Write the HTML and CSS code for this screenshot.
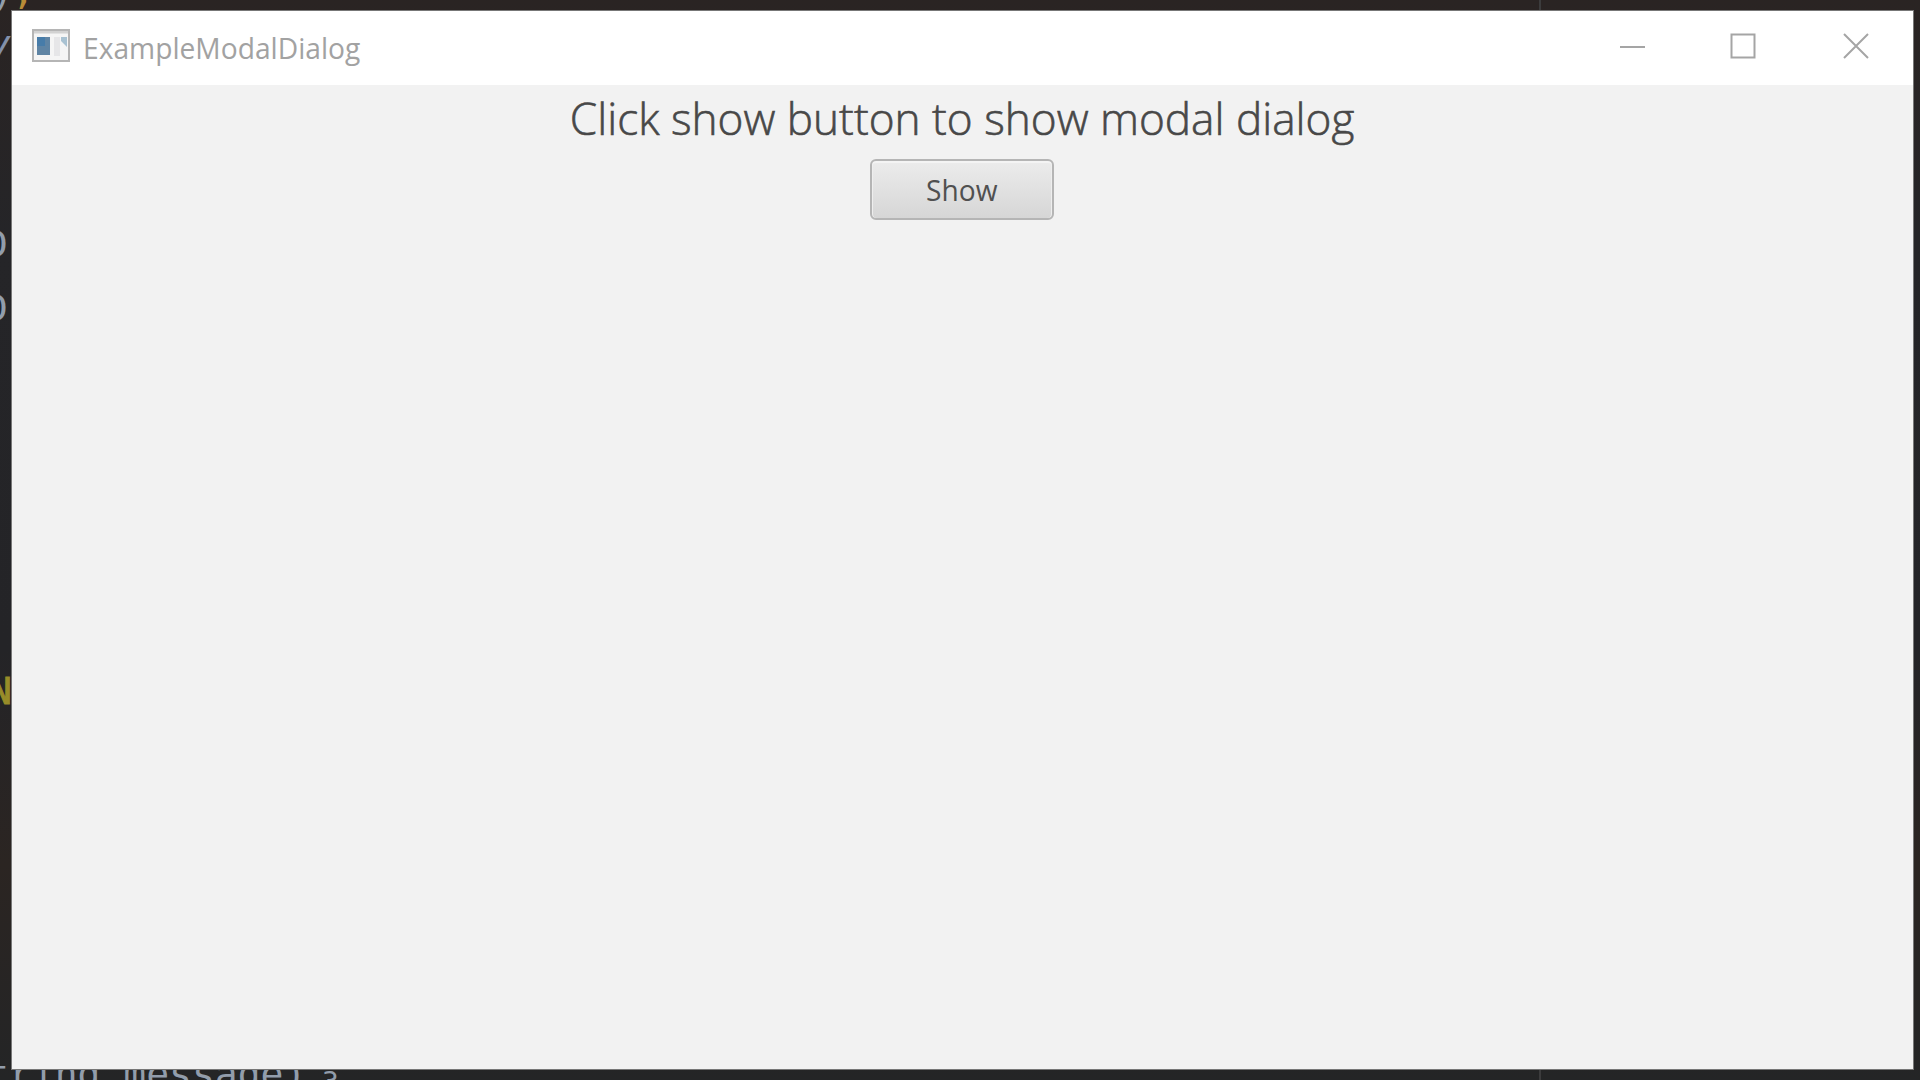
FILE: index.html
```html
<!DOCTYPE html>
<html lang="en">
<head>
<meta charset="utf-8">
<title>ExampleModalDialog</title>
<link rel="stylesheet" href="styles.css">
</head>
<body>
<div class="editor">
  <span class="code paren-top">)</span>
  <span class="code comma">,</span>
  <span class="code letter-y">y</span>
  <span class="code edge-a">D</span>
  <span class="code edge-b">D</span>
  <span class="code edge-n">N</span>
  <span class="code line-end">tring message)</span>
  <span class="code usage">3</span>
  <i class="margin-guide"></i>
</div>
<main class="window">
  <header class="titlebar">
    <svg class="app-icon" width="38" height="33" viewBox="0 0 38 33">
      <rect x="1" y="1" width="36" height="31" fill="#f5f5f5" stroke="#b5b5b5" stroke-width="2"/>
      <rect x="2" y="2" width="34" height="2.5" fill="#d2d2d2"/>
      <rect x="5" y="8" width="13" height="18" fill="#5f84a4"/>
      <rect x="5" y="8" width="8" height="9" fill="#477ca9"/>
      <rect x="22" y="8" width="6" height="19" fill="#e6e6e8"/>
      <path d="M29 8h6v10l-6-6z" fill="#a9c2d2"/>
    </svg>
    <h1 class="title"><span>ExampleModalDialog</span></h1>
    <svg class="controls" width="250" height="26" viewBox="0 0 250 26" fill="none" stroke="#a5a5a5" stroke-width="2">
      <path d="M0 14h25"/>
      <rect x="111.5" y="1.5" width="23" height="23"/>
      <path d="M224 1l24 24M248 1l-24 24"/>
    </svg>
  </header>
  <section class="content">
    <p class="message"><span>Click show button to show modal dialog</span></p>
    <button class="show" type="button"><span>Show</span></button>
  </section>
</main>
</body>
</html>
```
FILE: styles.css
```css
* { box-sizing: border-box; }
body {
  margin: 0;
  width: 1920px;
  height: 1080px;
  overflow: hidden;
  padding: 11px 7px 11px 12px;
  background: linear-gradient(#2a2423, #252528 22%, #242427 60%, #2b2522 80%, #242526);
  font-family: "Open Sans", "Noto Sans", sans-serif;
}
.editor { position: absolute; inset: 0; overflow: hidden; }
.code {
  position: absolute;
  font: 38px/44px "DejaVu Sans Mono", monospace;
  color: #929dab;
  white-space: pre;
}
.paren-top { left: -9px; top: -30px; }
.comma { left: 12px; top: -31px; color: #b98c38; }
.letter-y { left: -12px; top: 22px; font-style: italic; color: #8290aa; }
.edge-a { left: -15px; top: 222px; }
.edge-b { left: -15px; top: 286px; }
.edge-n { left: -11px; top: 669px; color: #988c29; -webkit-text-stroke: 1px; }
.line-end { left: -14px; top: 1052px; }
.usage { left: 322px; top: 1061px; font-size: 28px; }
.margin-guide { position: absolute; left: 1539px; top: 0; width: 2px; height: 1080px; background: #3c3c3d; }
.window {
  position: relative;
  height: 1058px;
  display: flex;
  flex-direction: column;
  background: #f2f2f2;
  box-shadow: 0 0 0 1px #777;
}
.titlebar {
  height: 74px;
  display: flex;
  align-items: flex-start;
  background: #fff;
}
.app-icon { margin: 18px 0 0 20px; }
.title {
  margin: 15px 0 0 13px;
  font-size: 29px;
  line-height: 44px;
  font-weight: 400;
  color: #a2a2a2;
}
.title span { display: inline-block; transform-origin: left; transform: scaleX(.972); }
.controls { margin: 22px 43px 0 auto; }
.content {
  display: flex;
  flex-direction: column;
  align-items: center;
}
.message {
  margin: 0;
  padding-top: 3px;
  font-size: 44px;
  line-height: 60px;
  font-weight: 300;
  color: #484848;
  white-space: nowrap;
}
.message span { display: inline-block; transform: scaleX(1.003); -webkit-text-stroke: .6px #484848; }
.show {
  width: 184px;
  height: 61px;
  margin: 11px 1px 0 0;
  padding: 0;
  border: 2px solid #b5b5b5;
  border-radius: 6px;
  background: linear-gradient(#ececec, #d6d6d6);
  box-shadow: inset 0 2px 0 #f4f4f4, inset 1px 0 0 #eee, inset -1px 0 0 #eee;
  font: 29px/40px "Open Sans", "Noto Sans", sans-serif;
  color: #505050;
}
.show span { display: inline-block; transform: scaleX(.97); }
```
